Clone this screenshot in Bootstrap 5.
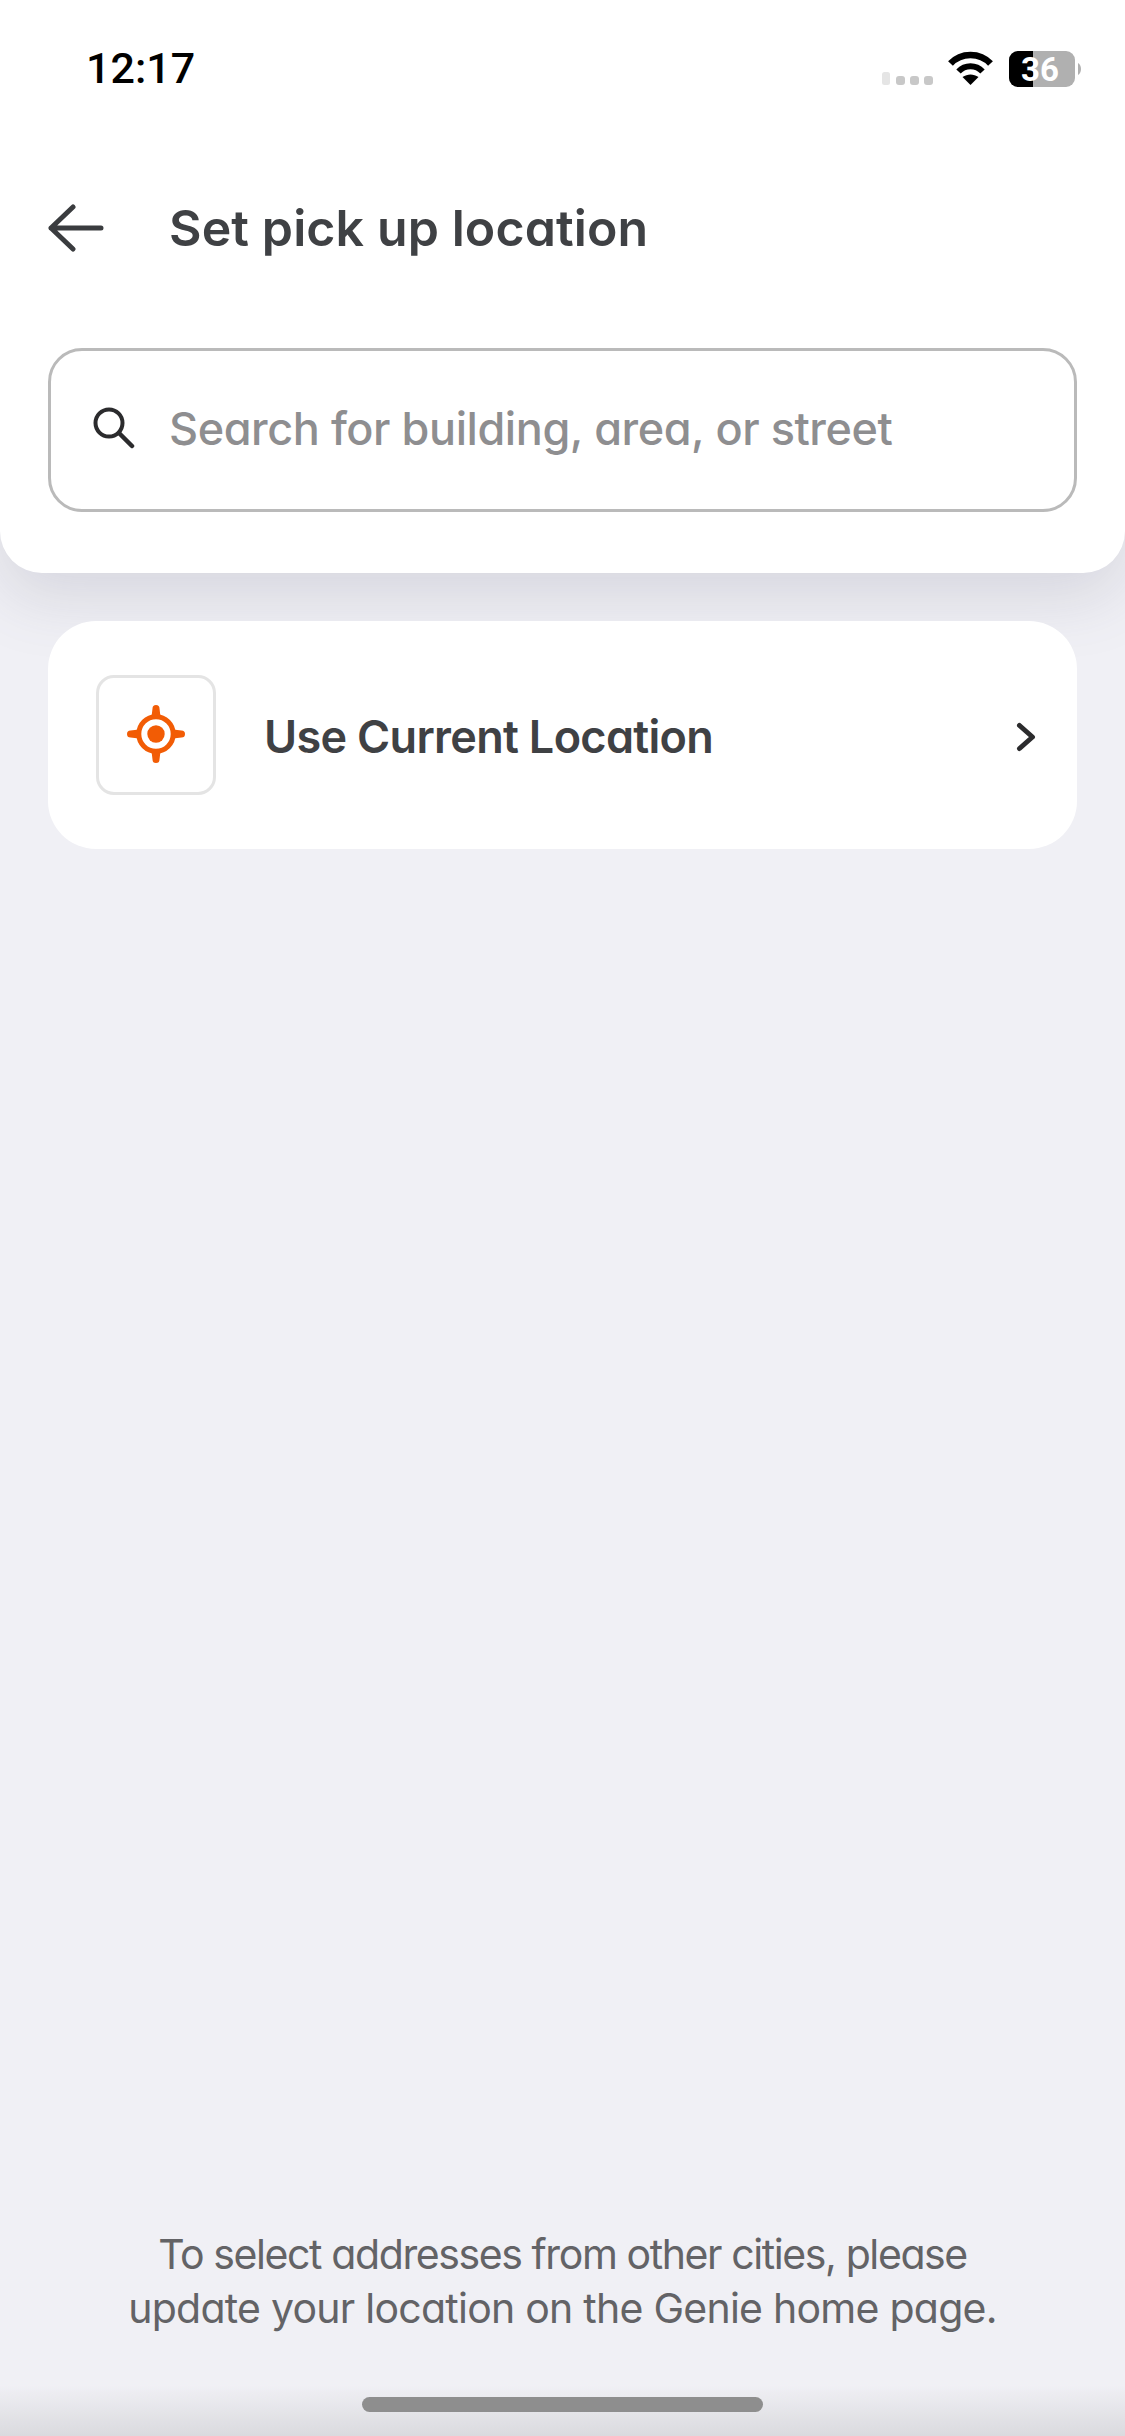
<!DOCTYPE html>
<html lang="en">
<head>
<meta charset="utf-8">
<title>Set pick up location</title>
<link href="https://cdn.jsdelivr.net/npm/bootstrap@5.3.0/dist/css/bootstrap.min.css" rel="stylesheet">
<style>
html,body{height:100%}
body{width:1125px;height:2436px;background:#f0f0f5;font-family:"Inter","Liberation Sans",sans-serif;font-feature-settings:"cv11" 1;overflow:hidden;color:#3f4144}
.phone-screen{height:2436px;background:linear-gradient(to bottom,#f0f0f5 2385px,#dadade 2436px)}
.top-sheet{height:573px;background:#fff;border-radius:0 0 42px 42px;box-shadow:0 24px 64px rgba(90,90,110,.17);padding:0 48px}
.status-row{height:136px;padding:0 0 0 38px;margin-right:-48px}
.clock{font-family:"Roboto","Liberation Sans",sans-serif;font-weight:500;font-size:43px;color:#000;line-height:1}
.status-icons{margin-right:40px;margin-top:4px}
.head-row{height:184px}
.back-btn{width:121px}
.page-title{font-size:50px;font-weight:600;letter-spacing:.12px;margin:0;color:#3f4144;line-height:1}
.search-box{height:164px;border:3px solid #bababa;border-radius:34px;padding-left:42px;margin-top:28px}
.search-glass{margin-top:-4px}
.search-hint{font-size:45px;color:#8e8e90;font-weight:500;letter-spacing:-.43px;margin-left:34px;margin-top:-3px;line-height:1}
.loc-card{height:228px;background:#fff;border-radius:48px;margin:48px 48px 0;padding:0 40px 0 48px}
.loc-icon{width:120px;height:120px;border:3px solid #e4e4e4;border-radius:18px}
.loc-target{margin-top:-3px}
.loc-label{font-size:45px;font-weight:600;letter-spacing:-.68px;margin-left:48px;margin-top:2px;color:#3f4144;line-height:1}
.loc-arrow{margin-top:4px}
.foot-note{font-size:41px;line-height:54px;color:#636366;letter-spacing:-.75px;margin:0;text-align:center}
.foot-first{letter-spacing:-1.4px}
.home-bar{width:401px;height:15px;background:#8e8e8e;border-radius:8px;margin:62px auto 24px}
.grow-fill{flex:1 1 auto}
</style>
</head>
<body>
<div class="phone-screen d-flex flex-column">
  <div class="top-sheet flex-shrink-0">
    <div class="status-row d-flex align-items-center justify-content-between">
      <span class="clock">12:17</span>
      <svg class="status-icons" width="205" height="40" viewBox="0 0 205 40" role="img" aria-label="Status icons">
        <rect x="2" y="22" width="8" height="13" rx="2.500" fill="#e5e5e5"/>
        <rect x="16" y="26" width="9" height="9" rx="3" fill="#c8c8c8"/>
        <rect x="30" y="26" width="9" height="9" rx="3" fill="#c8c8c8"/>
        <rect x="44" y="26" width="9" height="9" rx="3" fill="#c8c8c8"/>
        <path d="M70.500 13.500C81 2 100 2 110.500 13.500" fill="none" stroke="#000" stroke-width="6.500"/>
        <path d="M78.500 21.500C85 14.500 96 14.500 102.500 21.500" fill="none" stroke="#000" stroke-width="6"/>
        <path d="M90.500 35L82.500 27C87.500 23.500 93.500 23.500 98.500 27Z" fill="#000"/>
        <rect x="129" y="1" width="66" height="36" rx="9" fill="#b0b0b0"/>
        <path d="M138 1H153V37H138A9 9 0 0 1 129 28V10A9 9 0 0 1 138 1Z" fill="#000"/>
        <path d="M198 13C202 15 202 23 198 25Z" fill="#b0b0b0"/>
        <text x="160" y="31" text-anchor="middle" font-family="Roboto,Liberation Sans,sans-serif" font-size="33" font-weight="700" fill="#fff">36</text>
      </svg>
    </div>
    <div class="head-row d-flex align-items-center">
      <div class="back-btn">
        <svg class="d-block" width="56" height="50" viewBox="0 0 56 50" role="img" aria-label="Back">
          <path d="M25 4L3 25L25 46M3 25H53" fill="none" stroke="#3a3c3f" stroke-width="5" stroke-linecap="round" stroke-linejoin="round"/>
        </svg>
      </div>
      <h1 class="page-title">Set pick up location</h1>
    </div>
    <div class="search-box d-flex align-items-center">
      <svg class="flex-shrink-0 search-glass" width="42" height="42" viewBox="0 0 42 42" role="img" aria-label="Search">
        <circle cx="16" cy="16" r="13.500" fill="none" stroke="#2b2b2d" stroke-width="4"/>
        <path d="M26 26L39 39" stroke="#2b2b2d" stroke-width="4.500" stroke-linecap="round"/>
      </svg>
      <span class="search-hint">Search for building, area, or street</span>
    </div>
  </div>
  <div class="loc-card d-flex align-items-center flex-shrink-0">
    <div class="loc-icon d-flex align-items-center justify-content-center flex-shrink-0">
      <svg class="loc-target" width="58" height="58" viewBox="0 0 58 58" role="img" aria-label="Current location">
        <circle cx="29" cy="29" r="17.200" fill="none" stroke="#f25c05" stroke-width="5"/>
        <circle cx="29" cy="29" r="8.700" fill="#f25c05"/>
        <g fill="#f25c05">
          <path d="M24.500 12L25.500 3.500A3.500 3.500 0 0 1 32.500 3.500L33.500 12Z"/>
          <path d="M24.500 12L25.500 3.500A3.500 3.500 0 0 1 32.500 3.500L33.500 12Z" transform="rotate(90 29 29)"/>
          <path d="M24.500 12L25.500 3.500A3.500 3.500 0 0 1 32.500 3.500L33.500 12Z" transform="rotate(180 29 29)"/>
          <path d="M24.500 12L25.500 3.500A3.500 3.500 0 0 1 32.500 3.500L33.500 12Z" transform="rotate(270 29 29)"/>
        </g>
      </svg>
    </div>
    <span class="loc-label flex-grow-1">Use Current Location</span>
    <svg class="loc-arrow" width="24" height="34" viewBox="0 0 24 34" role="img" aria-label="Open">
      <path d="M6.500 5.500L19.500 17L6.500 28.500" fill="none" stroke="#2b2b2d" stroke-width="5" stroke-linecap="round" stroke-linejoin="round"/>
    </svg>
  </div>
  <div class="grow-fill"></div>
  <p class="foot-note"><span class="foot-first">To select addresses from other cities, please</span><br>update your location on the Genie home page.</p>
  <div class="home-bar flex-shrink-0"></div>
</div>
</body>
</html>
